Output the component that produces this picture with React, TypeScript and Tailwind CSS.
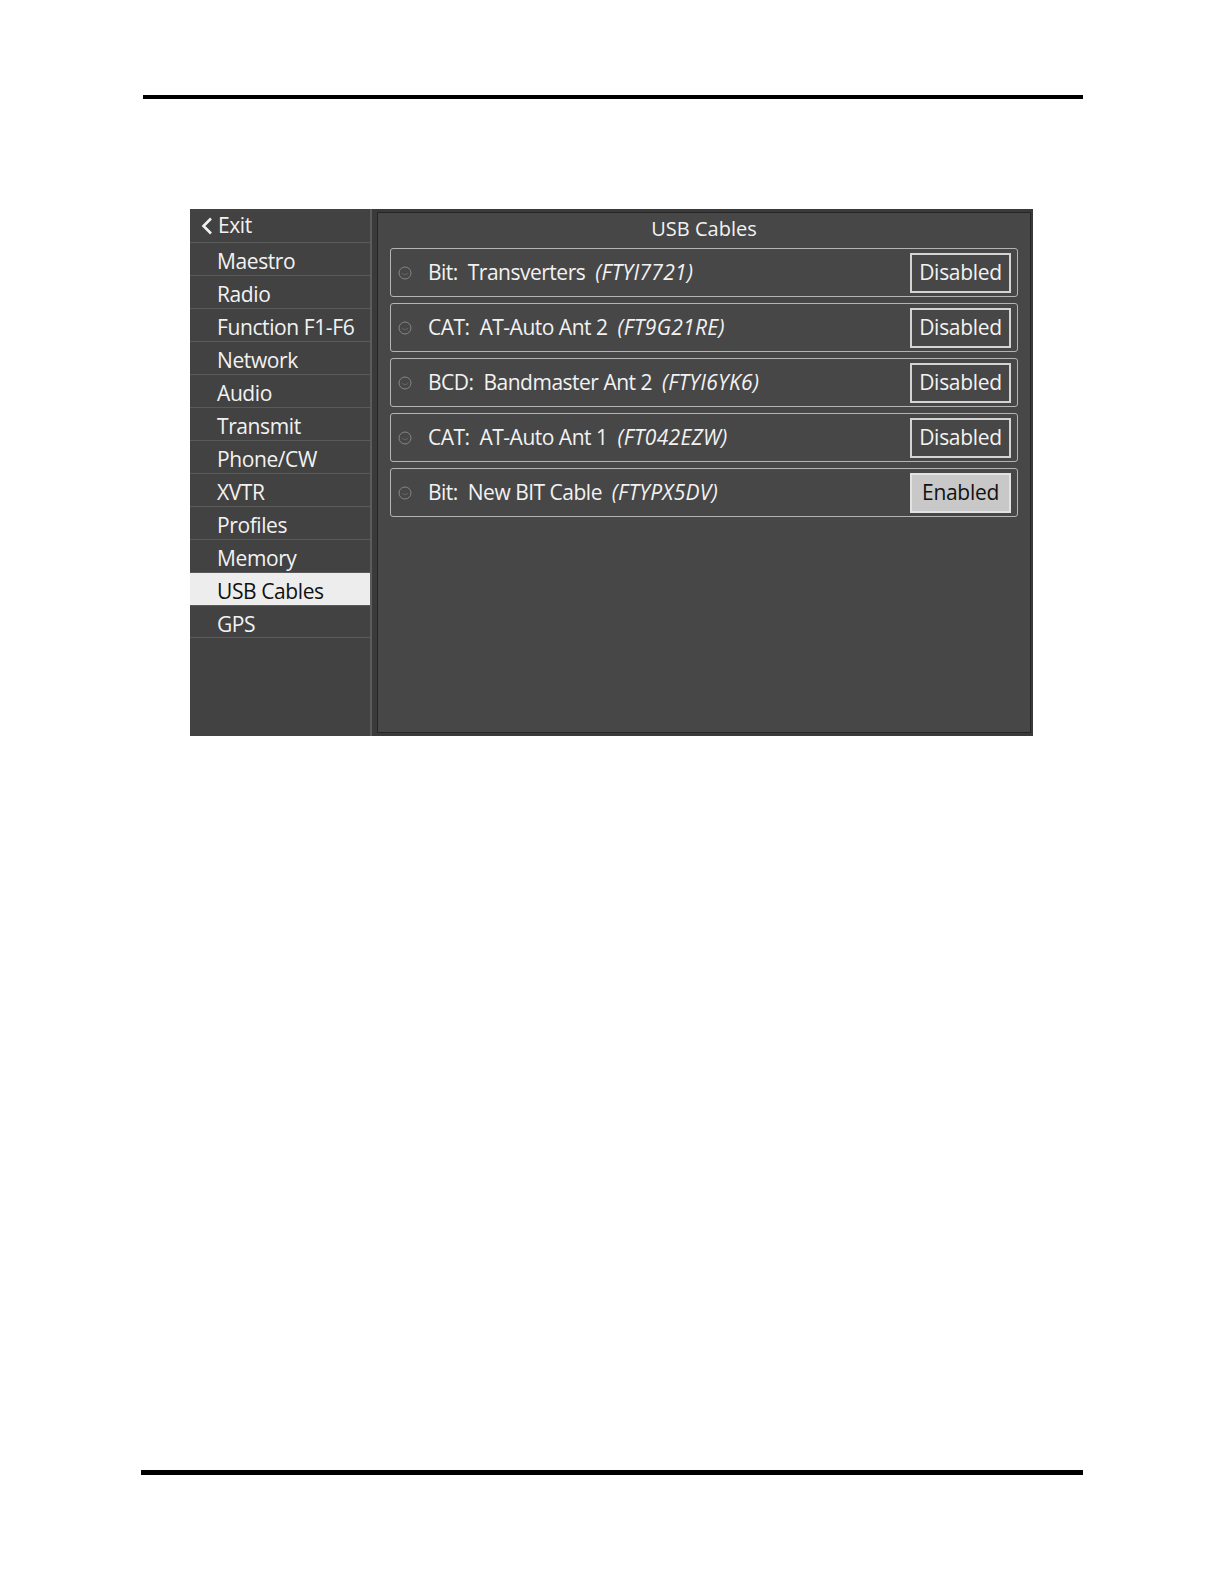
import React from "react";

const menu = [
  "Maestro",
  "Radio",
  "Function F1-F6",
  "Network",
  "Audio",
  "Transmit",
  "Phone/CW",
  "XVTR",
  "Profiles",
  "Memory",
  "USB Cables",
  "GPS",
];

const cables = [
  { type: "Bit:", name: "Transverters", id: "(FTYI7721)", enabled: false },
  { type: "CAT:", name: "AT-Auto Ant 2", id: "(FT9G21RE)", enabled: false },
  { type: "BCD:", name: "Bandmaster Ant 2", id: "(FTYI6YK6)", enabled: false },
  { type: "CAT:", name: "AT-Auto Ant 1", id: "(FT042EZW)", enabled: false },
  { type: "Bit:", name: "New BIT Cable", id: "(FTYPX5DV)", enabled: true },
];

function Radio() {
  return (
    <svg width="14" height="14" viewBox="0 0 14 14" className="shrink-0">
      <circle cx="7" cy="7" r="6" fill="none" stroke="#858585" strokeWidth="1" />
      <path d="M4 7.5 Q7 10 10 7.5" fill="none" stroke="#636363" strokeWidth="1" />
    </svg>
  );
}

export default function App() {
  return (
    <div
      className="w-[1224px] h-[1584px] bg-white flex flex-col"
      style={{ fontFamily: '"Open Sans", "Noto Sans", sans-serif' }}
    >
      <div className="mt-[95px] ml-[143px] w-[940px] h-[4px] bg-black" />

      <div className="mt-[110px] ml-[190px] w-[843px] h-[527px] bg-[#3a3a3a] flex">
        {/* Sidebar */}
        <div className="w-[182px] h-full bg-[#424242] border-r-2 border-[#5c5c5c] flex flex-col text-[#f2f2f2] text-[21px] tracking-[-0.4px]">
          <div className="h-[33px] flex items-center pl-[11px] gap-[5px]">
            <svg width="12" height="18" viewBox="0 0 12 18" className="shrink-0 mt-[1px]">
              <polyline
                points="10,1.5 2.5,9 10,16.5"
                fill="none"
                stroke="#f2f2f2"
                strokeWidth="2.6"
                strokeLinejoin="miter"
              />
            </svg>
            <span className="leading-[28px] pb-[2px]">Exit</span>
          </div>
          {menu.map((m, i) => {
            const selected = m === "USB Cables";
            return (
              <div
                key={m}
                className={
                  "h-[33px] border-t border-[#5a5a5a] pl-[27px] pt-[4px] leading-[28px] whitespace-nowrap " +
                  (i === menu.length - 1 ? "border-b " : "") +
                  (selected ? "bg-[#ededed] text-[#111111]" : "")
                }
              >
                {m}
              </div>
            );
          })}
        </div>

        {/* Content */}
        <div className="flex-1 mt-[3px] mb-[3px] ml-[5px] mr-[2px] bg-[#474747] border border-[#262626] flex flex-col px-[12px]">
          <div className="h-[35px] text-center text-[20px] leading-[31px] text-[#f2f2f2]">
            USB Cables
          </div>
          <div className="flex flex-col gap-[6px]">
            {cables.map((c, i) => (
              <div
                key={i}
                className="h-[49px] border border-[#b4b4b4] rounded-[3px] flex items-center pl-[7px] pr-[6px]"
              >
                <Radio />
                <div className="ml-[16px] flex-1 text-[21px] text-[#f2f2f2] whitespace-pre">
                  <span className="tracking-[-0.5px]">{c.type}  {c.name}  </span>
                  <span className="italic tracking-[0.3px]">{c.id}</span>
                </div>
                <div
                  className={
                    "w-[101px] h-[40px] border-2 flex items-center justify-center text-[21px] tracking-[-0.3px] " +
                    (c.enabled
                      ? "bg-[#c8c8c8] border-[#e2e2e2] text-[#111111]"
                      : "border-[#d4d4d4] text-[#f2f2f2]")
                  }
                >
                  {c.enabled ? "Enabled" : "Disabled"}
                </div>
              </div>
            ))}
          </div>
        </div>
      </div>

      <div className="mt-[734px] ml-[141px] w-[942px] h-[5px] bg-black" />
    </div>
  );
}
